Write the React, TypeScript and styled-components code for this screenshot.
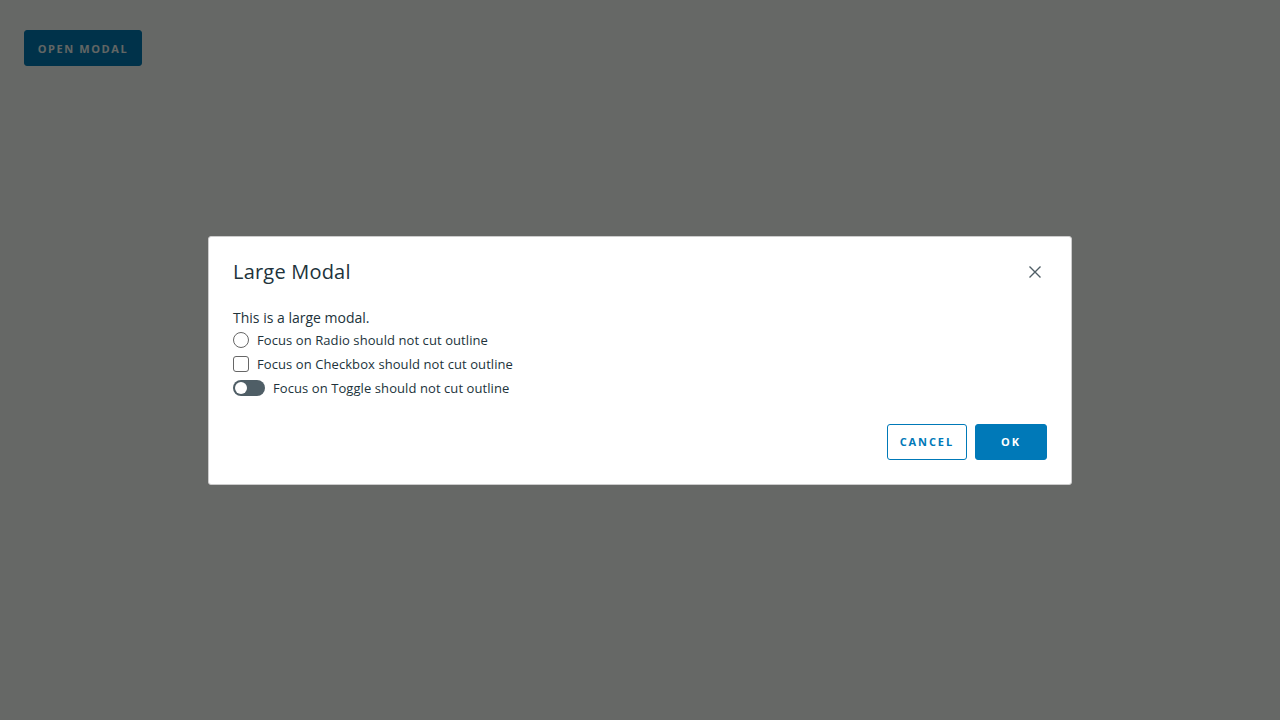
import styled, { createGlobalStyle } from "styled-components";

const GlobalStyle = createGlobalStyle`
  html, body {
    margin: 0;
    padding: 0;
    background: #ffffff;
    font-family: "Open Sans", "Liberation Sans", sans-serif;
    color: #21333b;
  }
`;

const Page = styled.div`
  position: relative;
  width: 1280px;
  height: 720px;
  padding: 30px 24px;
  box-sizing: border-box;
`;

const Button = styled.button<{ $variant?: "solid" | "outline" }>`
  height: 36px;
  min-width: 72px;
  padding: 0 12px;
  border-radius: 3px;
  border: 1px solid #0079b8;
  background: ${(p) => (p.$variant === "outline" ? "#ffffff" : "#0079b8")};
  color: ${(p) => (p.$variant === "outline" ? "#0079b8" : "#ffffff")};
  font-family: "Open Sans", "Liberation Sans", sans-serif;
  font-size: 11px;
  font-weight: 700;
  letter-spacing: 1.9px;
  text-transform: uppercase;
  cursor: pointer;
`;

const OpenButton = styled(Button)`
  width: 118px;
  letter-spacing: 1.6px;
  background: #0079b8;
  border-color: #0079b8;
  color: #f4f8fa;
`;

const Backdrop = styled.div`
  position: fixed;
  inset: 0;
  background: rgba(0, 4, 0, 0.6);
  display: flex;
  align-items: center;
  justify-content: center;
`;

const Modal = styled.div`
  width: 864px;
  box-sizing: border-box;
  background: #ffffff;
  border: 1px solid #cccccc;
  border-radius: 3px;
  padding: 23px 24px 24px;
  display: flex;
  flex-direction: column;
`;

const Header = styled.div`
  display: flex;
  align-items: center;
  justify-content: space-between;
`;

const Title = styled.h3`
  margin: 0;
  font-size: 20px;
  line-height: 24px;
  font-weight: 400;
  letter-spacing: 0.2px;
  color: #21333b;
`;

const Close = styled.button`
  width: 24px;
  height: 24px;
  border: none;
  background: none;
  padding: 0;
  display: flex;
  align-items: center;
  justify-content: center;
  cursor: pointer;
`;

const Body = styled.div`
  margin-top: 24px;
  font-size: 14px;
`;

const Lead = styled.p`
  margin: 0;
  line-height: 20px;
`;

const Row = styled.label`
  display: flex;
  align-items: center;
  gap: 8px;
  height: 24px;
  font-size: 13px;
  letter-spacing: 0.08px;
  color: #21333b;
`;

const Radio = styled.span`
  width: 16px;
  height: 16px;
  box-sizing: border-box;
  border: 1px solid #666666;
  border-radius: 50%;
`;

const Check = styled.span`
  width: 16px;
  height: 16px;
  box-sizing: border-box;
  border: 1px solid #666666;
  border-radius: 3px;
`;

const Toggle = styled.span`
  position: relative;
  width: 32px;
  height: 16px;
  border-radius: 8px;
  background: #4f5e66;
  &::after {
    content: "";
    position: absolute;
    left: 2px;
    top: 2px;
    width: 12px;
    height: 12px;
    border-radius: 50%;
    background: #ffffff;
  }
`;

const Footer = styled.div`
  margin-top: 24px;
  display: flex;
  justify-content: flex-end;
  gap: 8px;
`;

const CloseIcon = () => (
  <svg width="14" height="14" viewBox="0 0 14 14">
    <path d="M1.5 1.5 L12.5 12.5 M12.5 1.5 L1.5 12.5" stroke="#4f5e66" strokeWidth="1.4" />
  </svg>
);

export default function App() {
  return (
    <>
      <GlobalStyle />
      <Page>
        <OpenButton>Open Modal</OpenButton>
        <Backdrop>
          <Modal>
            <Header>
              <Title>Large Modal</Title>
              <Close aria-label="Close">
                <CloseIcon />
              </Close>
            </Header>
            <Body>
              <Lead>This is a large modal.</Lead>
              <Row>
                <Radio />
                Focus on Radio should not cut outline
              </Row>
              <Row>
                <Check />
                Focus on Checkbox should not cut outline
              </Row>
              <Row>
                <Toggle />
                Focus on Toggle should not cut outline
              </Row>
            </Body>
            <Footer>
              <Button $variant="outline">Cancel</Button>
              <Button>OK</Button>
            </Footer>
          </Modal>
        </Backdrop>
      </Page>
    </>
  );
}
